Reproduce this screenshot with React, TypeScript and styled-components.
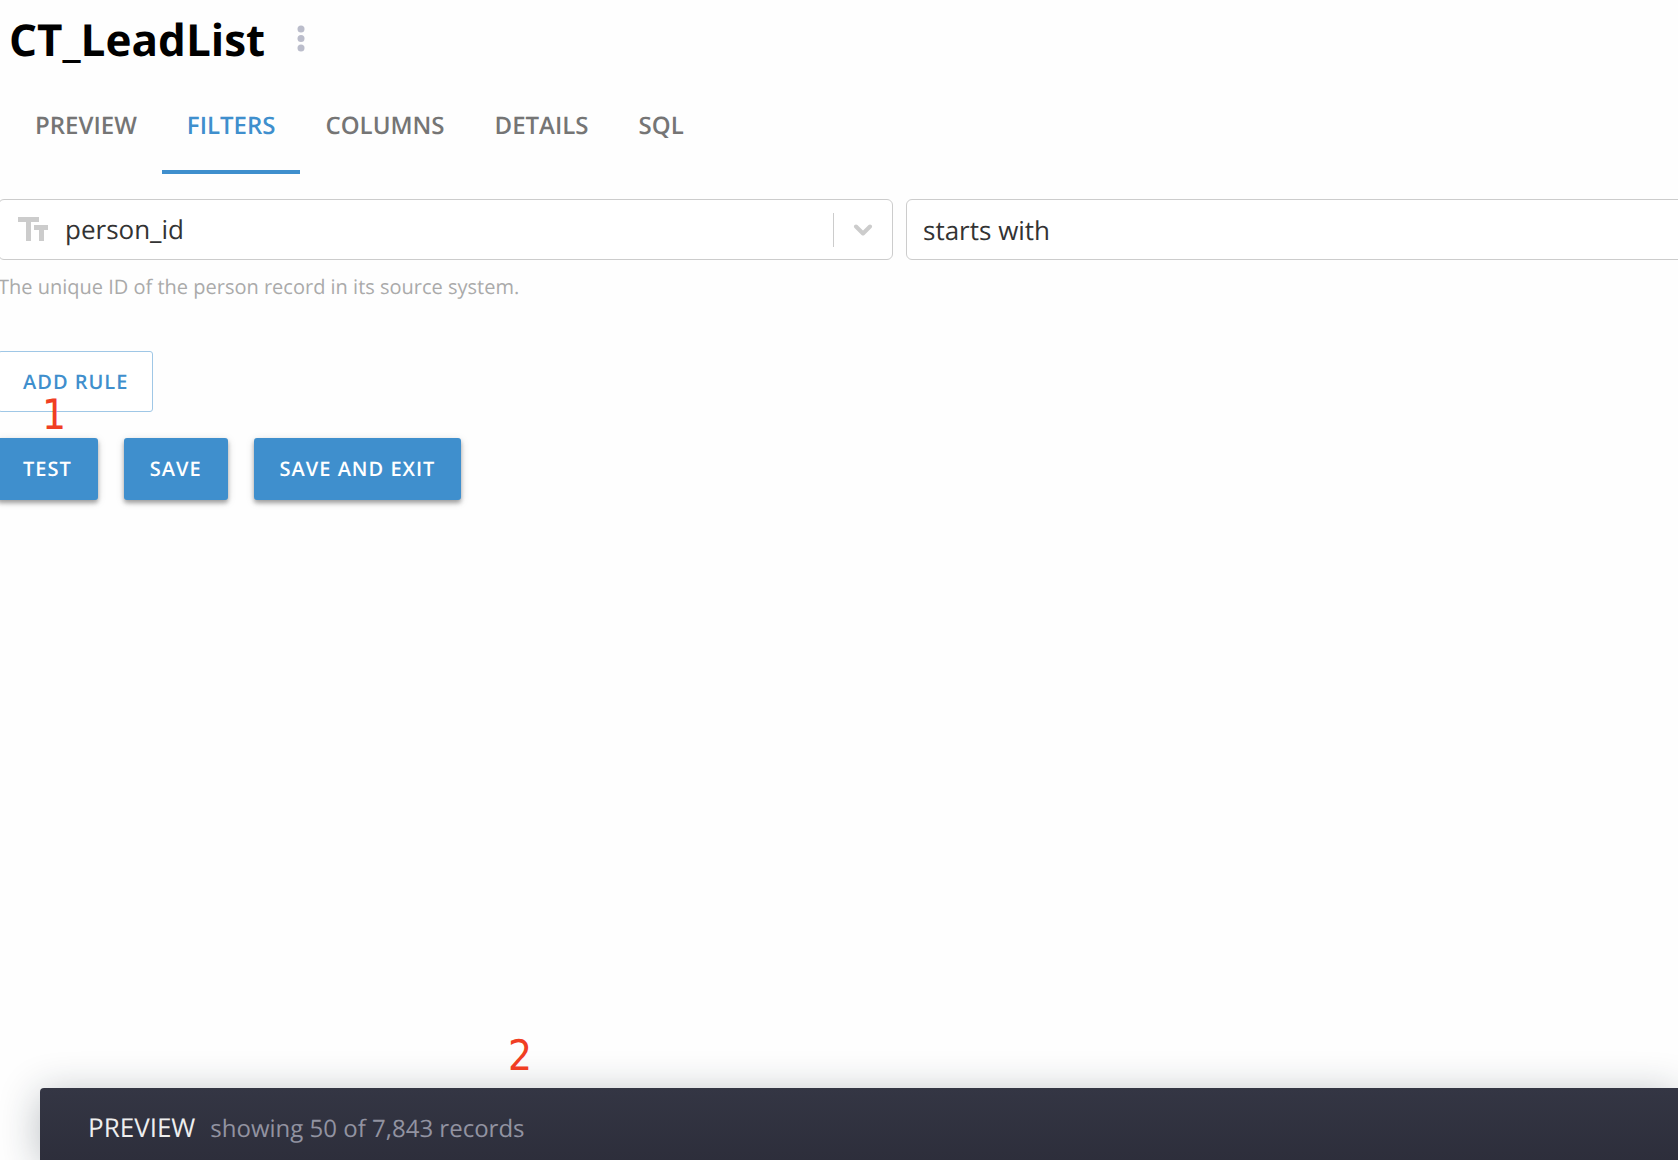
import React, { useState } from 'react';
import styled, { createGlobalStyle } from 'styled-components';

const GlobalStyle = createGlobalStyle`
  * { box-sizing: border-box; }
  body {
    margin: 0;
    background: #fefefe;
    font-family: 'Open Sans', 'Noto Sans', sans-serif;
    text-rendering: geometricPrecision;
  }
  button, select { font-family: inherit; text-rendering: inherit; }
`;

const Page = styled.div`
  display: flex;
  flex-direction: column;
  min-height: 100vh;
  overflow: hidden;
`;

const Header = styled.header`
  display: flex;
  align-items: center;
  gap: 29px;
  padding: 9px 9px 0;
`;

const Title = styled.h1`
  margin: 0;
  font-size: 44px;
  line-height: 60px;
  font-weight: 700;
  color: #000;
`;

const MenuButton = styled.button`
  display: flex;
  padding: 0;
  border: 0;
  background: none;
`;

const Tabs = styled.nav`
  display: flex;
  padding: 0 10px;
`;

const Tab = styled.button<{ $active: boolean }>`
  padding: 41px 25px 28px;
  border: 0;
  border-bottom: 4px solid ${(p) => (p.$active ? '#3f8fcd' : 'transparent')};
  background: none;
  color: ${(p) => (p.$active ? '#3f8fcd' : '#757575')};
  font-size: 24px;
  line-height: 32px;
  font-weight: 600;
`;

const Rule = styled.div`
  display: grid;
  grid-template-columns: 1fr 1fr;
  gap: 13px;
  margin: 25px -123px 0 -2px;
`;

const Control = styled.div`
  position: relative;
  display: flex;
  align-items: center;
  height: 61px;
  border: 1px solid #ccc;
  border-radius: 6px;
  background: #fff;
`;

const FieldIcon = styled.svg`
  position: absolute;
  left: 18px;
  top: 16px;
  pointer-events: none;
`;

const Select = styled.select<{ $icon?: boolean }>`
  appearance: none;
  flex: 1;
  align-self: stretch;
  padding: ${(p) => (p.$icon ? '0 16px 2px 66px' : '0 16px')};
  border: 0;
  background: none;
  color: #333;
  font-size: 26px;
`;

const Indicator = styled.span`
  display: flex;
  padding: 0 19px;
  height: 34px;
  align-items: center;
  border-left: 1px solid #ccc;
`;

const Help = styled.p`
  margin: 12px 0 0;
  color: #aaa;
  font-size: 20px;
  line-height: 30px;
`;

const AddRow = styled.div`
  position: relative;
  display: flex;
  margin: 49px 0 0 -2px;
`;

const Actions = styled.div`
  display: flex;
  gap: 26px;
  margin: 26px 0 0 -3px;
`;

const Button = styled.button<{ $outlined?: boolean }>`
  height: ${(p) => (p.$outlined ? '61px' : '62px')};
  padding: 0 ${(p) => (p.$outlined ? '24px' : '26px')};
  border: ${(p) => (p.$outlined ? '1px solid #9fc7e6' : '0')};
  border-radius: 3px;
  background: ${(p) => (p.$outlined ? '#fff' : '#3f8fcd')};
  color: ${(p) => (p.$outlined ? '#3f8fcd' : '#fff')};
  box-shadow: ${(p) =>
    p.$outlined ? 'none' : '0 3px 4px rgba(0, 0, 0, 0.32), 0 2px 10px rgba(0, 0, 0, 0.12)'};
  font-size: 20px;
  line-height: 28px;
  font-weight: 600;
  letter-spacing: 1px;
`;

const Step = styled.span<{ $left: number; $top: number }>`
  position: absolute;
  left: ${(p) => p.$left}px;
  top: ${(p) => p.$top}px;
  color: #f03e23;
  font-family: 'DejaVu Sans Condensed', 'DejaVu Sans', sans-serif;
  font-size: 42px;
  line-height: 48px;
  pointer-events: none;
`;

const PreviewBar = styled.footer`
  position: relative;
  display: flex;
  align-items: baseline;
  gap: 15px;
  height: 72px;
  margin: auto 0 0 40px;
  padding: 21px 48px 0;
  border-radius: 4px 0 0 0;
  background: linear-gradient(#343644, #2d2e3b);
  box-shadow: 0 6px 40px rgba(20, 35, 50, 0.3);
`;

const PreviewTitle = styled.h2`
  margin: 0;
  color: #eee;
  font-size: 26px;
  line-height: 36px;
  font-weight: 400;
`;

const PreviewCount = styled.span`
  color: #9293a1;
  font-size: 24px;
  line-height: 36px;
`;

const tabNames = ['PREVIEW', 'FILTERS', 'COLUMNS', 'DETAILS', 'SQL'];

export default function App() {
  const [active, setActive] = useState('FILTERS');
  return (
    <Page>
      <GlobalStyle />
      <Header>
        <Title>CT_LeadList</Title>
        <MenuButton aria-label="More options">
          <svg width="14" height="28" viewBox="0 0 14 28" fill="#bbbdcb">
            <circle cx="7" cy="4" r="3.5" />
            <circle cx="7" cy="13.5" r="3.5" />
            <circle cx="7" cy="23" r="3.5" />
          </svg>
        </MenuButton>
      </Header>
      <Tabs>
        {tabNames.map((name) => (
          <Tab key={name} $active={name === active} onClick={() => setActive(name)}>
            {name}
          </Tab>
        ))}
      </Tabs>
      <main>
        <Rule>
          <div>
            <Control>
              <FieldIcon width="32" height="26" viewBox="0 0 32 26" fill="#ccc" aria-hidden="true">
                <path d="M1 1h21v5h-8v19H9V6H1zM17 9h14v5h-4v11h-5V14h-5z" />
              </FieldIcon>
              <Select $icon aria-label="Field" defaultValue="person_id">
                <option>person_id</option>
              </Select>
              <Indicator>
                <svg width="20" height="12" viewBox="0 0 20 12" fill="none" stroke="#ccc" strokeWidth="4" strokeLinecap="round" strokeLinejoin="round">
                  <path d="M3 2.5l7 7 7-7" />
                </svg>
              </Indicator>
            </Control>
            <Help>The unique ID of the person record in its source system.</Help>
          </div>
          <Control>
            <Select aria-label="Operator" defaultValue="starts with">
              <option>starts with</option>
            </Select>
          </Control>
        </Rule>
        <AddRow>
          <Button $outlined>ADD RULE</Button>
          <Step $left={44} $top={40}>1</Step>
        </AddRow>
        <Actions>
          <Button>TEST</Button>
          <Button>SAVE</Button>
          <Button>SAVE AND EXIT</Button>
        </Actions>
      </main>
      <PreviewBar>
        <Step $left={468} $top={-56}>2</Step>
        <PreviewTitle>PREVIEW</PreviewTitle>
        <PreviewCount>showing 50 of 7,843 records</PreviewCount>
      </PreviewBar>
    </Page>
  );
}
